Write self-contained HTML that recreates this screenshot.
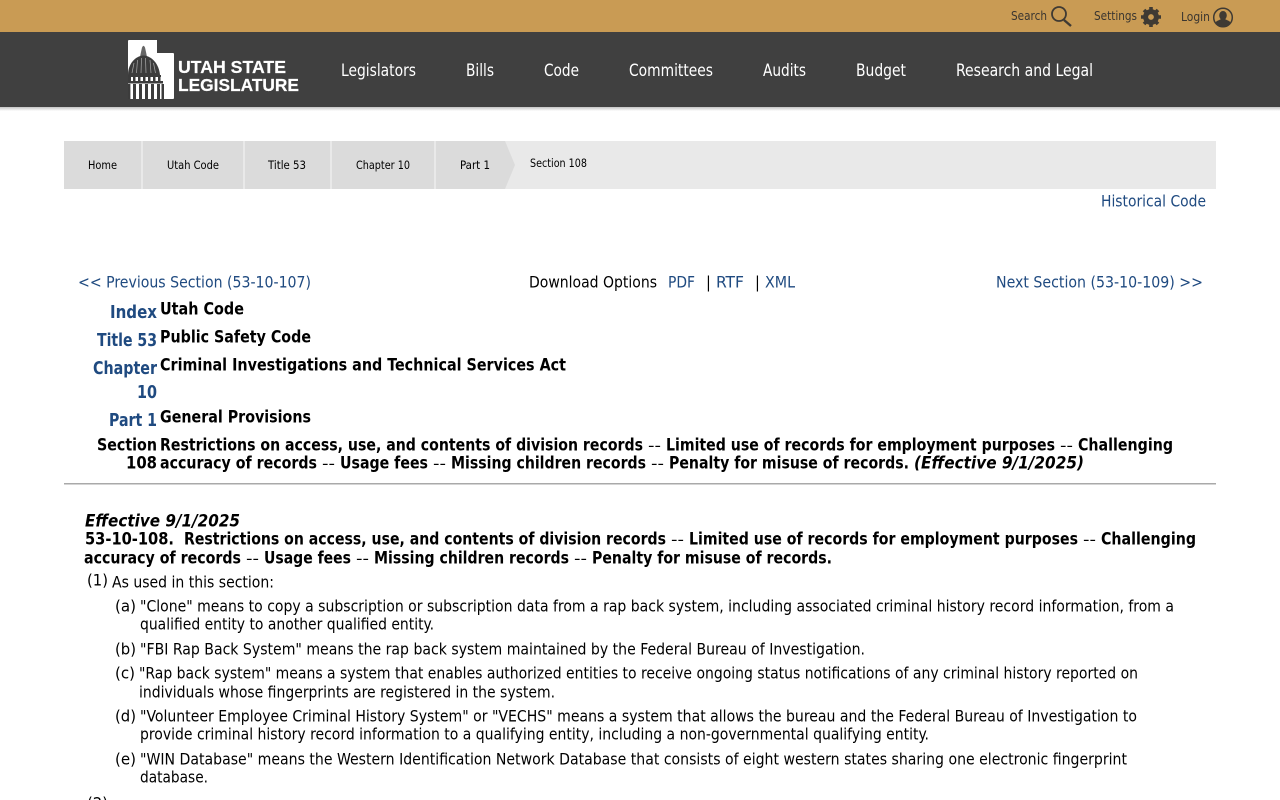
<!DOCTYPE html>
<html lang="en">
<head>
<meta charset="utf-8">
<title>Utah Code Section 53-10-108</title>
<style>
html,body{margin:0;padding:0;width:1280px;height:800px;overflow:hidden;background:#fff}
svg{display:block}
text{font-family:"DejaVu Sans Condensed","DejaVu Sans","Liberation Sans",sans-serif;font-size:16px;fill:#000;white-space:pre}
.n{fill:#fff;font-size:17px}
.t{fill:#3b3630;font-size:12.5px}
.c{font-size:11.500px;fill:#000}
.l{fill:#1f4a80;font-size:16px}
.h{fill:#1f4a80;font-weight:bold;font-size:17.500px}
.b{font-weight:bold;font-size:16.500px;fill:#000}
.i{font-weight:bold;font-style:italic;font-size:16.500px;fill:#000}
.d{font-size:15.500px;fill:#000}
.g{font-family:"Liberation Sans",sans-serif;font-weight:bold;font-size:17.500px;fill:#fff;stroke:#fff;stroke-width:.2px}
text:not(.h):not(.n):not(.g):not(.t):not(.c){transform:translateY(.6px)}
</style>
</head>
<body>
<svg width="1280" height="800" viewBox="0 0 1280 800" xmlns="http://www.w3.org/2000/svg">
<defs>
<linearGradient id="sh" x1="0" y1="0" x2="0" y2="1"><stop offset="0" stop-color="#c4c4c4"/><stop offset="1" stop-color="#fff"/></linearGradient>
</defs>
<rect width="1280" height="32" fill="#c99b54"/>
<rect y="32" width="1280" height="75" fill="#404040"/>
<rect y="107" width="1280" height="4" fill="url(#sh)"/>

<text class="t" x="1011" y="20" textLength="36" lengthAdjust="spacingAndGlyphs">Search</text>
<g fill="none" stroke="#3f3a33"><circle cx="1059" cy="14" r="7" stroke-width="1.800"/><path d="M1064 20 L1071 26" stroke-width="2.400"/></g>
<text class="t" x="1094" y="20" textLength="43" lengthAdjust="spacingAndGlyphs">Settings</text>
<circle cx="1151" cy="17" r="5.400" fill="none" stroke="#3f3a33" stroke-width="5"/>
<path d="M1151 7V27M1141 17H1161M1144 10L1158 24M1158 10L1144 24" stroke="#3f3a33" stroke-width="3.600" stroke-dasharray="3.200 13.600 3.200" fill="none"/>
<text class="t" x="1181" y="21" textLength="29" lengthAdjust="spacingAndGlyphs">Login</text>
<circle cx="1223" cy="17.500" r="9.300" fill="none" stroke="#3f3a33" stroke-width="1.500"/>
<path d="M1223 11a3.800 4.200 0 0 1 3.800 4.200c0 2-1 3.300-1.600 4.100l3.800 1.700c1 .6 1.300 1.200 1.400 2.200a9 9 0 0 1-14.800 0c.1-1 .4-1.600 1.400-2.200l3.800-1.700c-.6-.8-1.600-2.100-1.600-4.100a3.800 4.200 0 0 1 3.800-4.200z" fill="#3f3a33"/>

<path d="M129 40H157V53H173Q174 53 174 54V98Q174 99 173 99H129Q128 99 128 98V41Q128 40 129 40Z" fill="#fff"/>
<g fill="#3c3c3c">
<path d="M141 52L142 47.500Q143.500 44 145 47.500L146 52L147 57H140Z" fill="#666"/>
<path d="M128 75C128 64 135 56 143.500 55.500C152 56 159 64 160 75Z"/>
<path d="M128 75H161V77H128ZM128 81H163V83.500H128Z"/>
</g>
<g stroke="#aaa" stroke-width=".7"><path d="M132 73L134 63M136.500 73L137.500 60M141 73L141.500 58M146 73L145.500 58M151 73L150 60M155.500 73L153.500 63"/></g>
<g fill="#3c3c3c"><rect x="128" y="77" width="3" height="4"/><rect x="133" y="77" width="2.500" height="4"/><rect x="138" y="77" width="2.500" height="4"/><rect x="143" y="77" width="2.500" height="4"/><rect x="148" y="77" width="2.500" height="4"/><rect x="153" y="77" width="2.500" height="4"/><rect x="158" y="77" width="2.500" height="4"/>
<rect x="128" y="84" width="2.400" height="15"/><rect x="133" y="84" width="3" height="15"/><rect x="139" y="84" width="3" height="15"/><rect x="145" y="84" width="3" height="15"/><rect x="151" y="84" width="3" height="15"/><rect x="157" y="84" width="3" height="15"/><rect x="161.500" y="84" width="2.500" height="15"/></g>
<text class="g" x="178" y="73" textLength="108" lengthAdjust="spacingAndGlyphs">UTAH STATE</text>
<text class="g" x="178" y="91" textLength="121" lengthAdjust="spacingAndGlyphs">LEGISLATURE</text>

<text class="n" x="341" y="76" textLength="75" lengthAdjust="spacingAndGlyphs">Legislators</text>
<text class="n" x="466" y="76" textLength="28" lengthAdjust="spacingAndGlyphs">Bills</text>
<text class="n" x="544" y="76" textLength="35" lengthAdjust="spacingAndGlyphs">Code</text>
<text class="n" x="629" y="76" textLength="84" lengthAdjust="spacingAndGlyphs">Committees</text>
<text class="n" x="763" y="76" textLength="43" lengthAdjust="spacingAndGlyphs">Audits</text>
<text class="n" x="856" y="76" textLength="50" lengthAdjust="spacingAndGlyphs">Budget</text>
<text class="n" x="956" y="76" textLength="137" lengthAdjust="spacingAndGlyphs">Research and Legal</text>

<rect x="64" y="141" width="1152" height="48" fill="#e9e9e9"/>
<g fill="#dbdbdb"><rect x="64" y="141" width="77" height="48"/><rect x="143" y="141" width="100" height="48"/><rect x="245" y="141" width="85" height="48"/><rect x="332" y="141" width="102" height="48"/><path d="M436 141H505L515 165L505 189H436Z"/></g>
<text class="c" x="88" y="169" textLength="29" lengthAdjust="spacingAndGlyphs">Home</text>
<text class="c" x="167" y="169" textLength="52" lengthAdjust="spacingAndGlyphs">Utah Code</text>
<text class="c" x="268" y="169" textLength="38" lengthAdjust="spacingAndGlyphs">Title 53</text>
<text class="c" x="356" y="169" textLength="54" lengthAdjust="spacingAndGlyphs">Chapter 10</text>
<text class="c" x="460" y="169" textLength="30" lengthAdjust="spacingAndGlyphs">Part 1</text>
<text class="c" x="530" y="167" textLength="57" lengthAdjust="spacingAndGlyphs">Section 108</text>

<text class="l" x="1101" y="206" textLength="105" lengthAdjust="spacingAndGlyphs">Historical Code</text>
<text class="l" x="78" y="287" textLength="233" lengthAdjust="spacingAndGlyphs">&lt;&lt; Previous Section (53-10-107)</text>
<text x="529" y="287" textLength="128" lengthAdjust="spacingAndGlyphs">Download Options</text>
<text class="l" x="668" y="287" textLength="27" lengthAdjust="spacingAndGlyphs">PDF</text>
<text x="706" y="287">|</text>
<text class="l" x="716" y="287" textLength="28" lengthAdjust="spacingAndGlyphs">RTF</text>
<text x="755" y="287">|</text>
<text class="l" x="765" y="287" textLength="30" lengthAdjust="spacingAndGlyphs">XML</text>
<text class="l" x="996" y="287" textLength="207" lengthAdjust="spacingAndGlyphs">Next Section (53-10-109) &gt;&gt;</text>

<text class="h" x="110" y="318" textLength="47" lengthAdjust="spacingAndGlyphs">Index</text>
<text class="h" x="97" y="346" textLength="60" lengthAdjust="spacingAndGlyphs">Title 53</text>
<text class="h" x="93" y="374" textLength="64" lengthAdjust="spacingAndGlyphs">Chapter</text>
<text class="h" x="137" y="398" textLength="20" lengthAdjust="spacingAndGlyphs">10</text>
<text class="h" x="109" y="426" textLength="48" lengthAdjust="spacingAndGlyphs">Part 1</text>
<text class="b" x="97" y="450" textLength="60" lengthAdjust="spacingAndGlyphs">Section</text>
<text class="b" x="126" y="468" textLength="31" lengthAdjust="spacingAndGlyphs">108</text>

<text class="b" x="160" y="314" textLength="84" lengthAdjust="spacingAndGlyphs">Utah Code</text>
<text class="b" x="160" y="342" textLength="151" lengthAdjust="spacingAndGlyphs">Public Safety Code</text>
<text class="b" x="160" y="370" textLength="406" lengthAdjust="spacingAndGlyphs">Criminal Investigations and Technical Services Act</text>
<text class="b" x="160" y="422" textLength="151" lengthAdjust="spacingAndGlyphs">General Provisions</text>

<text class="b" x="160" y="450" textLength="483" lengthAdjust="spacingAndGlyphs">Restrictions on access, use, and contents of division records</text>
<text class="d" x="648" y="450" textLength="13" lengthAdjust="spacingAndGlyphs">--</text>
<text class="b" x="666" y="450" textLength="389" lengthAdjust="spacingAndGlyphs">Limited use of records for employment purposes</text>
<text class="d" x="1060" y="450" textLength="13" lengthAdjust="spacingAndGlyphs">--</text>
<text class="b" x="1078" y="450" textLength="95" lengthAdjust="spacingAndGlyphs">Challenging</text>

<text class="b" x="160" y="468" textLength="157" lengthAdjust="spacingAndGlyphs">accuracy of records</text>
<text class="d" x="322" y="468" textLength="13" lengthAdjust="spacingAndGlyphs">--</text>
<text class="b" x="340" y="468" textLength="88" lengthAdjust="spacingAndGlyphs">Usage fees</text>
<text class="d" x="433" y="468" textLength="13" lengthAdjust="spacingAndGlyphs">--</text>
<text class="b" x="451" y="468" textLength="195" lengthAdjust="spacingAndGlyphs">Missing children records</text>
<text class="d" x="651" y="468" textLength="13" lengthAdjust="spacingAndGlyphs">--</text>
<text class="b" x="669" y="468" textLength="240" lengthAdjust="spacingAndGlyphs">Penalty for misuse of records.</text>
<text class="i" x="914" y="468" textLength="170" lengthAdjust="spacingAndGlyphs">(Effective 9/1/2025)</text>

<rect x="64" y="483" width="1152" height="1.500" fill="#a9a9a9"/>

<text class="i" x="85" y="526" textLength="155" lengthAdjust="spacingAndGlyphs">Effective 9/1/2025</text>
<text class="b" x="85" y="544" textLength="89" lengthAdjust="spacingAndGlyphs">53-10-108.</text>
<text class="b" x="184" y="544" textLength="482" lengthAdjust="spacingAndGlyphs">Restrictions on access, use, and contents of division records</text>
<text class="d" x="671" y="544" textLength="13" lengthAdjust="spacingAndGlyphs">--</text>
<text class="b" x="689" y="544" textLength="389" lengthAdjust="spacingAndGlyphs">Limited use of records for employment purposes</text>
<text class="d" x="1083" y="544" textLength="13" lengthAdjust="spacingAndGlyphs">--</text>
<text class="b" x="1101" y="544" textLength="95" lengthAdjust="spacingAndGlyphs">Challenging</text>
<text class="b" x="84" y="563" textLength="157" lengthAdjust="spacingAndGlyphs">accuracy of records</text>
<text class="d" x="246" y="563" textLength="13" lengthAdjust="spacingAndGlyphs">--</text>
<text class="b" x="264" y="563" textLength="87" lengthAdjust="spacingAndGlyphs">Usage fees</text>
<text class="d" x="356" y="563" textLength="13" lengthAdjust="spacingAndGlyphs">--</text>
<text class="b" x="374" y="563" textLength="195" lengthAdjust="spacingAndGlyphs">Missing children records</text>
<text class="d" x="574" y="563" textLength="13" lengthAdjust="spacingAndGlyphs">--</text>
<text class="b" x="592" y="563" textLength="240" lengthAdjust="spacingAndGlyphs">Penalty for misuse of records.</text>

<text x="87" y="585" textLength="21" lengthAdjust="spacingAndGlyphs">(1)</text>
<text x="112" y="587" textLength="162" lengthAdjust="spacingAndGlyphs">As used in this section:</text>
<text x="115" y="611" textLength="21" lengthAdjust="spacingAndGlyphs">(a)</text>
<text x="140" y="611" textLength="1034" lengthAdjust="spacingAndGlyphs">"Clone" means to copy a subscription or subscription data from a rap back system, including associated criminal history record information, from a</text>
<text x="140" y="629" textLength="294" lengthAdjust="spacingAndGlyphs">qualified entity to another qualified entity.</text>
<text x="115" y="654" textLength="21" lengthAdjust="spacingAndGlyphs">(b)</text>
<text x="140" y="654" textLength="725" lengthAdjust="spacingAndGlyphs">"FBI Rap Back System" means the rap back system maintained by the Federal Bureau of Investigation.</text>
<text x="115" y="678" textLength="20" lengthAdjust="spacingAndGlyphs">(c)</text>
<text x="139" y="678" textLength="999" lengthAdjust="spacingAndGlyphs">"Rap back system" means a system that enables authorized entities to receive ongoing status notifications of any criminal history reported on</text>
<text x="139" y="697" textLength="416" lengthAdjust="spacingAndGlyphs">individuals whose fingerprints are registered in the system.</text>
<text x="115" y="721" textLength="21" lengthAdjust="spacingAndGlyphs">(d)</text>
<text x="140" y="721" textLength="997" lengthAdjust="spacingAndGlyphs">"Volunteer Employee Criminal History System" or "VECHS" means a system that allows the bureau and the Federal Bureau of Investigation to</text>
<text x="140" y="739" textLength="789" lengthAdjust="spacingAndGlyphs">provide criminal history record information to a qualifying entity, including a non-governmental qualifying entity.</text>
<text x="115" y="764" textLength="21" lengthAdjust="spacingAndGlyphs">(e)</text>
<text x="140" y="764" textLength="987" lengthAdjust="spacingAndGlyphs">"WIN Database" means the Western Identification Network Database that consists of eight western states sharing one electronic fingerprint</text>
<text x="140" y="782" textLength="68" lengthAdjust="spacingAndGlyphs">database.</text>
<text x="87" y="808" textLength="21" lengthAdjust="spacingAndGlyphs">(2)</text>
</svg>
</body>
</html>
